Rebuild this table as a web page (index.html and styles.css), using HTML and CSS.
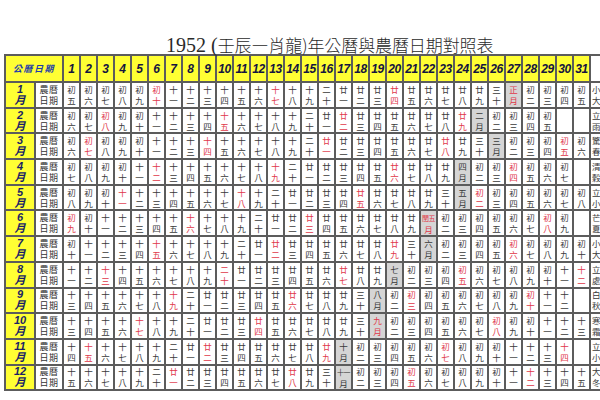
FILE: index.html
```html
<!DOCTYPE html>
<html lang="zh-Hant">
<head>
<meta charset="utf-8">
<title>1952年公曆與農曆日期對照表</title>
<link rel="stylesheet" href="styles.css">
</head>
<body>
<div class="page">
<h1 class="title"><span class="lat">1952 (</span><span class="cjk">壬辰—肖龍)年公曆與農曆日期對照表</span></h1>
<table class="cal">
<colgroup><col class="c-m"><col class="c-l"><col span="31" class="c-d"><col class="c-j"></colgroup>
<tr class="head"><th colspan="2" class="hl">公曆日期</th><th>1</th><th>2</th><th>3</th><th>4</th><th>5</th><th>6</th><th>7</th><th>8</th><th>9</th><th>10</th><th>11</th><th>12</th><th>13</th><th>14</th><th>15</th><th>16</th><th>17</th><th>18</th><th>19</th><th>20</th><th>21</th><th>22</th><th>23</th><th>24</th><th>25</th><th>26</th><th>27</th><th>28</th><th>29</th><th>30</th><th>31</th><th class="jq"></th></tr>
<tr><th class="m">1<br>月</th><td class="l">農曆<br>日期</td><td>初<br>五</td><td>初<br>六</td><td>初<br>七</td><td>初<br>八</td><td>初<br>九</td><td class="sun">初<br>十</td><td>十<br>一</td><td>十<br>二</td><td>十<br>三</td><td>十<br>四</td><td>十<br>五</td><td>十<br>六</td><td class="sun">十<br>七</td><td>十<br>八</td><td>十<br>九</td><td>二<br>十</td><td>廿<br>一</td><td>廿<br>二</td><td>廿<br>三</td><td class="sun">廿<br>四</td><td>廿<br>五</td><td>廿<br>六</td><td>廿<br>七</td><td>廿<br>八</td><td>廿<br>九</td><td>三<br>十</td><td class="mon sun">正<br>月</td><td>初<br>二</td><td>初<br>三</td><td>初<br>四</td><td>初<br>五</td><td class="jq">小寒<br>大寒</td></tr>
<tr><th class="m">2<br>月</th><td class="l">農曆<br>日期</td><td>初<br>六</td><td>初<br>七</td><td class="sun">初<br>八</td><td>初<br>九</td><td>初<br>十</td><td>十<br>一</td><td>十<br>二</td><td>十<br>三</td><td>十<br>四</td><td class="sun">十<br>五</td><td>十<br>六</td><td>十<br>七</td><td>十<br>八</td><td>十<br>九</td><td>二<br>十</td><td>廿<br>一</td><td class="sun">廿<br>二</td><td>廿<br>三</td><td>廿<br>四</td><td>廿<br>五</td><td>廿<br>六</td><td>廿<br>七</td><td>廿<br>八</td><td class="sun">廿<br>九</td><td class="mon">二<br>月</td><td>初<br>二</td><td>初<br>三</td><td>初<br>四</td><td>初<br>五</td><td></td><td></td><td class="jq">立春<br>雨水</td></tr>
<tr><th class="m">3<br>月</th><td class="l">農曆<br>日期</td><td>初<br>六</td><td class="sun">初<br>七</td><td>初<br>八</td><td>初<br>九</td><td>初<br>十</td><td>十<br>一</td><td>十<br>二</td><td>十<br>三</td><td class="sun">十<br>四</td><td>十<br>五</td><td>十<br>六</td><td>十<br>七</td><td>十<br>八</td><td>十<br>九</td><td>二<br>十</td><td class="sun">廿<br>一</td><td>廿<br>二</td><td>廿<br>三</td><td>廿<br>四</td><td>廿<br>五</td><td>廿<br>六</td><td>廿<br>七</td><td class="sun">廿<br>八</td><td>廿<br>九</td><td>三<br>十</td><td class="mon">三<br>月</td><td>初<br>二</td><td>初<br>三</td><td>初<br>四</td><td class="sun">初<br>五</td><td>初<br>六</td><td class="jq">驚蟄<br>春分</td></tr>
<tr><th class="m">4<br>月</th><td class="l">農曆<br>日期</td><td>初<br>七</td><td>初<br>八</td><td>初<br>九</td><td>初<br>十</td><td>十<br>一</td><td class="sun">十<br>二</td><td>十<br>三</td><td>十<br>四</td><td>十<br>五</td><td>十<br>六</td><td>十<br>七</td><td>十<br>八</td><td class="sun">十<br>九</td><td>二<br>十</td><td>廿<br>一</td><td>廿<br>二</td><td>廿<br>三</td><td>廿<br>四</td><td>廿<br>五</td><td class="sun">廿<br>六</td><td>廿<br>七</td><td>廿<br>八</td><td>廿<br>九</td><td class="mon">四<br>月</td><td>初<br>二</td><td>初<br>三</td><td class="sun">初<br>四</td><td>初<br>五</td><td>初<br>六</td><td>初<br>七</td><td></td><td class="jq">清明<br>穀雨</td></tr>
<tr><th class="m">5<br>月</th><td class="l">農曆<br>日期</td><td>初<br>八</td><td>初<br>九</td><td>初<br>十</td><td class="sun">十<br>一</td><td>十<br>二</td><td>十<br>三</td><td>十<br>四</td><td>十<br>五</td><td>十<br>六</td><td>十<br>七</td><td class="sun">十<br>八</td><td>十<br>九</td><td>二<br>十</td><td>廿<br>一</td><td>廿<br>二</td><td>廿<br>三</td><td>廿<br>四</td><td class="sun">廿<br>五</td><td>廿<br>六</td><td>廿<br>七</td><td>廿<br>八</td><td>廿<br>九</td><td>三<br>十</td><td class="mon">五<br>月</td><td class="sun">初<br>二</td><td>初<br>三</td><td>初<br>四</td><td>初<br>五</td><td>初<br>六</td><td>初<br>七</td><td>初<br>八</td><td class="jq">立夏<br>小滿</td></tr>
<tr><th class="m">6<br>月</th><td class="l">農曆<br>日期</td><td class="sun">初<br>九</td><td>初<br>十</td><td>十<br>一</td><td>十<br>二</td><td>十<br>三</td><td>十<br>四</td><td>十<br>五</td><td class="sun">十<br>六</td><td>十<br>七</td><td>十<br>八</td><td>十<br>九</td><td>二<br>十</td><td>廿<br>一</td><td>廿<br>二</td><td class="sun">廿<br>三</td><td>廿<br>四</td><td>廿<br>五</td><td>廿<br>六</td><td>廿<br>七</td><td>廿<br>八</td><td>廿<br>九</td><td class="mon sun"><span class="sm">閏五</span><br>月</td><td>初<br>二</td><td>初<br>三</td><td>初<br>四</td><td>初<br>五</td><td>初<br>六</td><td>初<br>七</td><td class="sun">初<br>八</td><td>初<br>九</td><td></td><td class="jq">芒種<br>夏至</td></tr>
<tr><th class="m">7<br>月</th><td class="l">農曆<br>日期</td><td>初<br>十</td><td>十<br>一</td><td>十<br>二</td><td>十<br>三</td><td>十<br>四</td><td class="sun">十<br>五</td><td>十<br>六</td><td>十<br>七</td><td>十<br>八</td><td>十<br>九</td><td>二<br>十</td><td>廿<br>一</td><td class="sun">廿<br>二</td><td>廿<br>三</td><td>廿<br>四</td><td>廿<br>五</td><td>廿<br>六</td><td>廿<br>七</td><td>廿<br>八</td><td class="sun">廿<br>九</td><td>三<br>十</td><td class="mon">六<br>月</td><td>初<br>二</td><td>初<br>三</td><td>初<br>四</td><td>初<br>五</td><td class="sun">初<br>六</td><td>初<br>七</td><td>初<br>八</td><td>初<br>九</td><td>初<br>十</td><td class="jq">小暑<br>大暑</td></tr>
<tr><th class="m">8<br>月</th><td class="l">農曆<br>日期</td><td>十<br>一</td><td>十<br>二</td><td class="sun">十<br>三</td><td>十<br>四</td><td>十<br>五</td><td>十<br>六</td><td>十<br>七</td><td>十<br>八</td><td>十<br>九</td><td class="sun">二<br>十</td><td>廿<br>一</td><td>廿<br>二</td><td>廿<br>三</td><td>廿<br>四</td><td>廿<br>五</td><td>廿<br>六</td><td class="sun">廿<br>七</td><td>廿<br>八</td><td>廿<br>九</td><td class="mon">七<br>月</td><td>初<br>二</td><td>初<br>三</td><td>初<br>四</td><td class="sun">初<br>五</td><td>初<br>六</td><td>初<br>七</td><td>初<br>八</td><td>初<br>九</td><td>初<br>十</td><td>十<br>一</td><td class="sun">十<br>二</td><td class="jq">立秋<br>處暑</td></tr>
<tr><th class="m">9<br>月</th><td class="l">農曆<br>日期</td><td>十<br>三</td><td>十<br>四</td><td>十<br>五</td><td>十<br>六</td><td>十<br>七</td><td>十<br>八</td><td class="sun">十<br>九</td><td>二<br>十</td><td>廿<br>一</td><td>廿<br>二</td><td>廿<br>三</td><td>廿<br>四</td><td>廿<br>五</td><td class="sun">廿<br>六</td><td>廿<br>七</td><td>廿<br>八</td><td>廿<br>九</td><td>三<br>十</td><td class="mon">八<br>月</td><td>初<br>二</td><td class="sun">初<br>三</td><td>初<br>四</td><td>初<br>五</td><td>初<br>六</td><td>初<br>七</td><td>初<br>八</td><td>初<br>九</td><td class="sun">初<br>十</td><td>十<br>一</td><td>十<br>二</td><td></td><td class="jq">白露<br>秋分</td></tr>
<tr><th class="m">10<br>月</th><td class="l">農曆<br>日期</td><td>十<br>三</td><td>十<br>四</td><td>十<br>五</td><td>十<br>六</td><td class="sun">十<br>七</td><td>十<br>八</td><td>十<br>九</td><td>二<br>十</td><td>廿<br>一</td><td>廿<br>二</td><td>廿<br>三</td><td class="sun">廿<br>四</td><td>廿<br>五</td><td>廿<br>六</td><td>廿<br>七</td><td>廿<br>八</td><td>廿<br>九</td><td>三<br>十</td><td class="mon sun">九<br>月</td><td>初<br>二</td><td>初<br>三</td><td>初<br>四</td><td>初<br>五</td><td>初<br>六</td><td>初<br>七</td><td class="sun">初<br>八</td><td>初<br>九</td><td>初<br>十</td><td>十<br>一</td><td>十<br>二</td><td>十<br>三</td><td class="jq">寒露<br>霜降</td></tr>
<tr><th class="m">11<br>月</th><td class="l">農曆<br>日期</td><td>十<br>四</td><td class="sun">十<br>五</td><td>十<br>六</td><td>十<br>七</td><td>十<br>八</td><td>十<br>九</td><td>二<br>十</td><td>廿<br>一</td><td class="sun">廿<br>二</td><td>廿<br>三</td><td>廿<br>四</td><td>廿<br>五</td><td>廿<br>六</td><td>廿<br>七</td><td>廿<br>八</td><td class="sun">廿<br>九</td><td class="mon">十<br>月</td><td>初<br>二</td><td>初<br>三</td><td>初<br>四</td><td>初<br>五</td><td>初<br>六</td><td class="sun">初<br>七</td><td>初<br>八</td><td>初<br>九</td><td>初<br>十</td><td>十<br>一</td><td>十<br>二</td><td>十<br>三</td><td class="sun">十<br>四</td><td></td><td class="jq">立冬<br>小雪</td></tr>
<tr><th class="m">12<br>月</th><td class="l">農曆<br>日期</td><td>十<br>五</td><td>十<br>六</td><td>十<br>七</td><td>十<br>八</td><td>十<br>九</td><td>二<br>十</td><td class="sun">廿<br>一</td><td>廿<br>二</td><td>廿<br>三</td><td>廿<br>四</td><td>廿<br>五</td><td>廿<br>六</td><td>廿<br>七</td><td class="sun">廿<br>八</td><td>廿<br>九</td><td>三<br>十</td><td class="mon"><span class="sm">十一</span><br>月</td><td>初<br>二</td><td>初<br>三</td><td>初<br>四</td><td class="sun">初<br>五</td><td>初<br>六</td><td>初<br>七</td><td>初<br>八</td><td>初<br>九</td><td>初<br>十</td><td>十<br>一</td><td class="sun">十<br>二</td><td>十<br>三</td><td>十<br>四</td><td>十<br>五</td><td class="jq">大雪<br>冬至</td></tr>
</table>
</div>
</body>
</html>
```
FILE: styles.css
```css
html, body {
  margin: 0;
  padding: 0;
  background: #ffffff;
  overflow: hidden;
}
.page {
  width: 600px;
  height: 400px;
  overflow: hidden;
  font-family: "Noto Sans CJK TC", "Liberation Sans", sans-serif;
}
.title {
  margin: 0;
  padding: 26px 0 4px 166px;
  height: 24px;
  line-height: 24px;
  font-weight: normal;
  color: #2a2a2a;
  white-space: nowrap;
}
.title .lat {
  font-family: "Liberation Serif", serif;
  font-size: 20px;
}
.title .cjk {
  font-family: "Noto Sans CJK TC", sans-serif;
  font-size: 17px;
  font-weight: 300;
  letter-spacing: -0.1px;
}
.cal {
  margin-left: 4px;
  border-collapse: collapse;
  table-layout: fixed;
  width: 646px;
}
.c-m { width: 30px; }
.c-l { width: 28px; }
.c-d { width: 17px; }
.c-j { width: 61px; }
.cal th, .cal td {
  border: 2px solid #5c5c5c;
  padding: 0;
  text-align: center;
  vertical-align: middle;
  overflow: hidden;
  white-space: nowrap;
}
.cal td {
  font-size: 8.5px;
  line-height: 11px;
  color: #3a3a3a;
  height: 23.7px;
}
.head th {
  height: 25px;
  background: #ffff33;
  font-family: "Liberation Sans", sans-serif;
  font-style: italic;
  font-weight: bold;
  font-size: 12px;
  line-height: 14px;
  color: #15153f;
  letter-spacing: -0.3px;
}
.head th.hl {
  font-family: "Noto Sans CJK TC", sans-serif;
  font-size: 9px;
  color: #1f3fa8;
  letter-spacing: 1.5px;
}
.head th.jq {
  background: #ffffff;
}
.cal th.m {
  background: #ffff33;
  font-family: "Liberation Sans", "Noto Sans CJK TC", sans-serif;
  font-style: italic;
  font-weight: bold;
  font-size: 11px;
  line-height: 11px;
  color: #1a1f66;
}
.cal td.l {
  font-size: 9px;
  color: #333;
  letter-spacing: 0.5px;
}
.cal td.jq {
  text-align: left;
  padding-left: 1px;
  letter-spacing: 1px;
}
.cal td.sun {
  color: #e0384a;
}
.cal td.mon {
  background: #d5d5d5;
}
.sm {
  font-size: 7px;
  letter-spacing: -0.5px;
}
```
